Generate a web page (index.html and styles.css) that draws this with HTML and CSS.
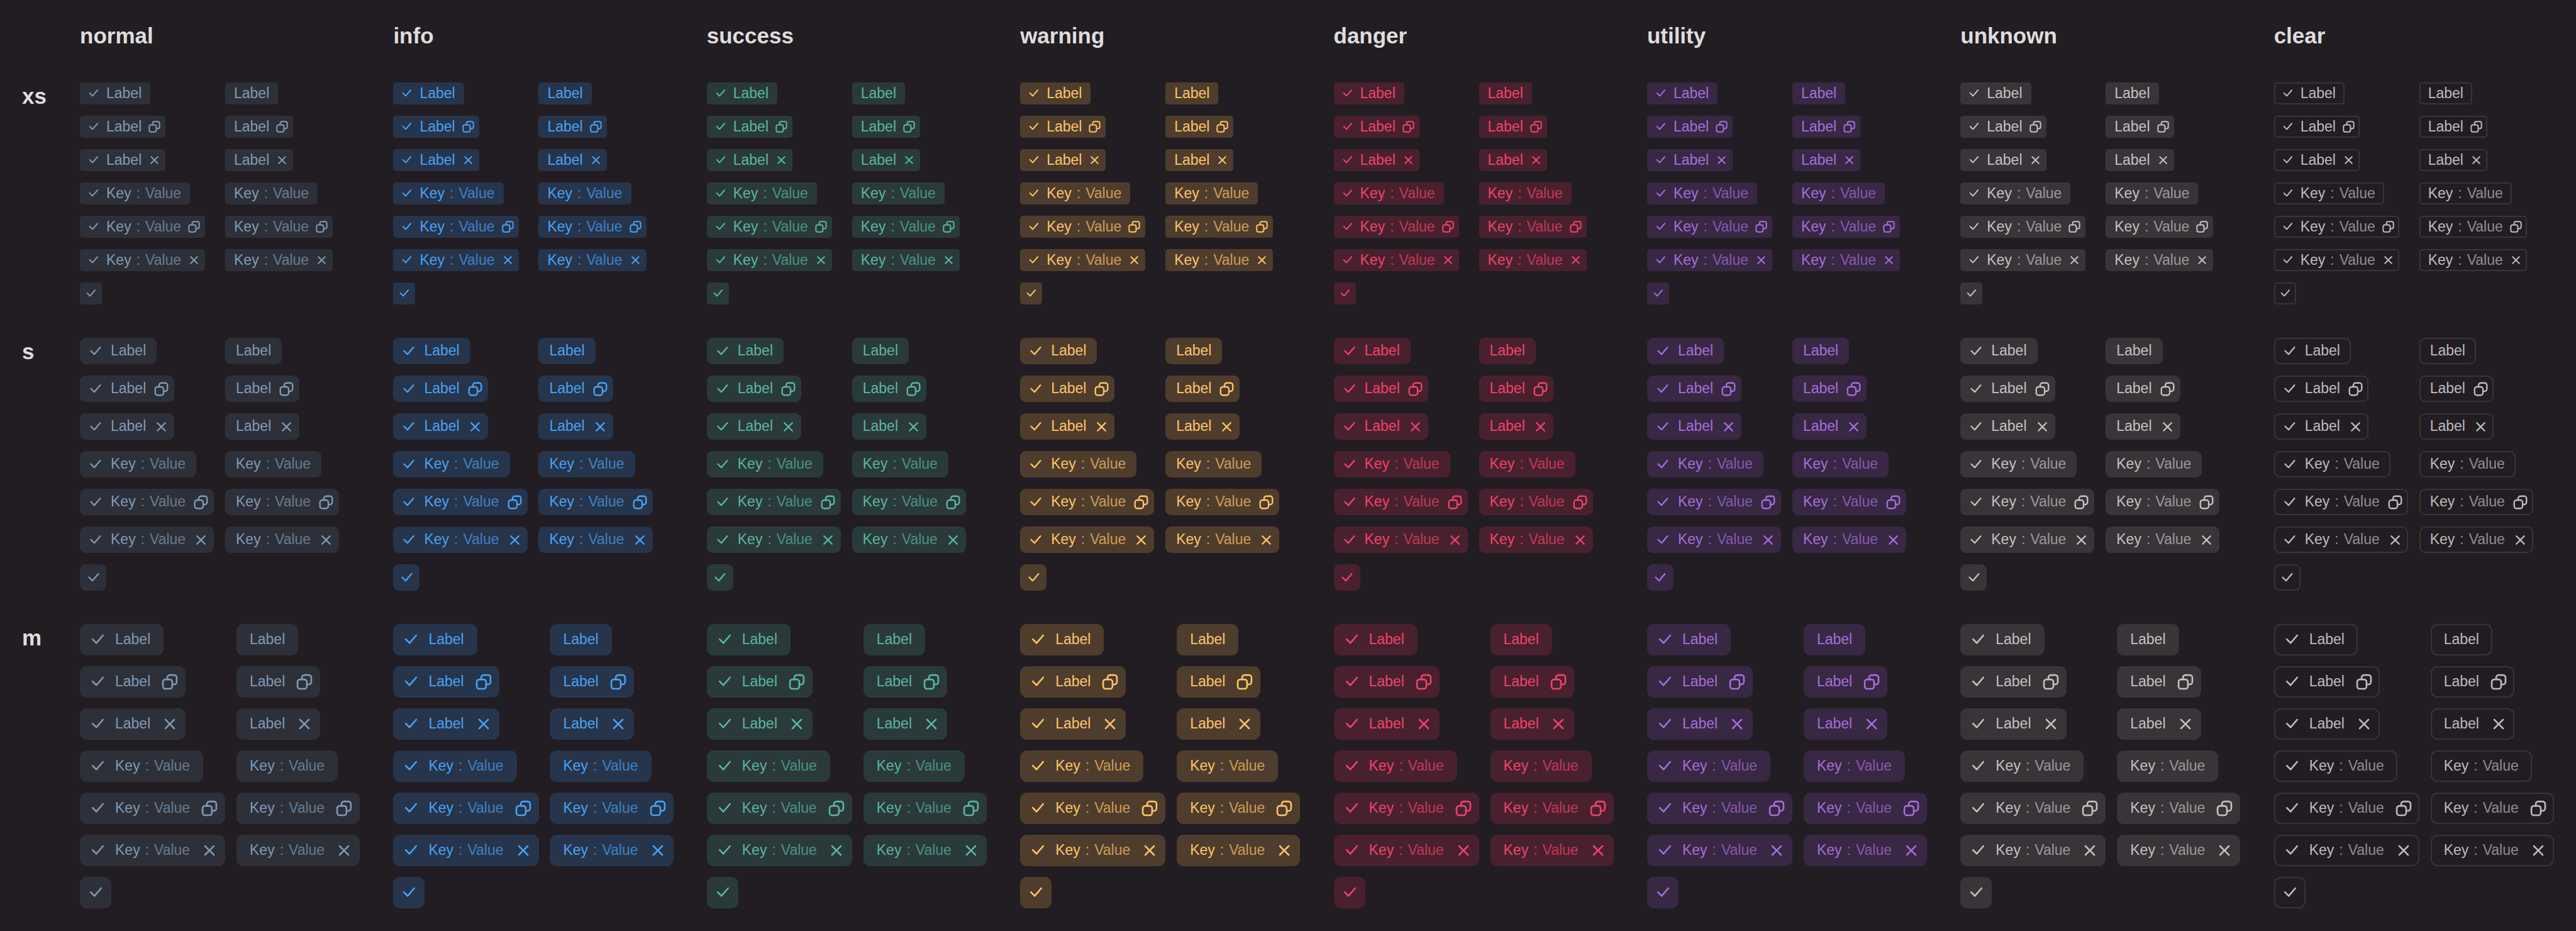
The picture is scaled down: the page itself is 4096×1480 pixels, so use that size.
FILE: index.html
```html
<!DOCTYPE html>
<html lang="en">
<head>
<meta charset="utf-8">
<title>Label showcase</title>
<link rel="stylesheet" href="styles.css">
</head>
<body>
<svg class="sprite" aria-hidden="true">
  <symbol id="check" viewBox="0 0 16 16"><path fill-rule="evenodd" d="M13.488 3.43a.75.75 0 0 1 .081 1.058l-6 7a.75.75 0 0 1-1.1.042l-3.5-3.5A.75.75 0 0 1 4.03 6.97l2.928 2.927 5.473-6.385a.75.75 0 0 1 1.057-.081"/></symbol>
  <symbol id="copy" viewBox="0 0 16 16"><path fill-rule="evenodd" d="M12 2.5H8A1.5 1.5 0 0 0 6.5 4v1H8a3 3 0 0 1 3 3v1.5h1A1.5 1.5 0 0 0 13.5 8V4A1.5 1.5 0 0 0 12 2.5M11 11h1a3 3 0 0 0 3-3V4a3 3 0 0 0-3-3H8a3 3 0 0 0-3 3v1H4a3 3 0 0 0-3 3v4a3 3 0 0 0 3 3h4a3 3 0 0 0 3-3zM4 6.5h4A1.5 1.5 0 0 1 9.5 8v4A1.5 1.5 0 0 1 8 13.5H4A1.5 1.5 0 0 1 2.5 12V8A1.5 1.5 0 0 1 4 6.5"/></symbol>
  <symbol id="close" viewBox="0 0 16 16"><path fill-rule="evenodd" d="M3.47 3.47a.75.75 0 0 1 1.06 0L8 6.94l3.47-3.47a.75.75 0 1 1 1.06 1.06L9.06 8l3.47 3.47a.75.75 0 1 1-1.06 1.06L8 9.06l-3.47 3.47a.75.75 0 0 1-1.06-1.06L6.94 8 3.47 4.53a.75.75 0 0 1 0-1.06Z"/></symbol>
</svg>
<main class="showcase" id="showcase"></main>
<script src="script.js"></script>
</body>
</html>
```
FILE: styles.css
```css
* { box-sizing: border-box; }

body {
  margin: 0;
  min-height: 100vh;
  background: #221d22;
  color: #dedddd;
  font-family: "Liberation Sans", Arial, sans-serif;
  font-size: 23px;
  line-height: 26px;
}

.sprite { display: none; }

.showcase {
  display: grid;
  grid-template-columns: 74px repeat(8, minmax(0, 1fr));
  column-gap: 18px;
  row-gap: 53px;
  padding: 35px 0 36px 35px;
}

.title {
  margin: 0;
  font-size: 35px;
  font-weight: 700;
  line-height: 43px;
}

.cell {
  display: grid;
  grid-template-columns: 213px 1fr;
  column-gap: 18px;
  align-content: start;
}

.cell.m { grid-template-columns: 231px 1fr; }

.stack {
  display: flex;
  flex-direction: column;
  align-items: flex-start;
  gap: 18px;
}

.cell.m .stack { gap: 17px; }

/* Label */
.label {
  --height: 35px;
  --icon: 21px;
  --edge: 14px;
  --icon-edge: 11px;
  --icon-gap: 10px;
  --action-gap: 10px;
  --action-edge: 7px;
  display: flex;
  align-items: center;
  height: var(--height);
  padding: 0 var(--edge) 0 var(--edge);
  border-radius: 5px;
  white-space: nowrap;
  background: var(--fill);
  color: var(--ink);
}

.label.s {
  --height: 42px;
  --icon: 25px;
  --edge: 17px;
  --icon-edge: 12px;
  --icon-gap: 12px;
  --action-gap: 12px;
  --action-edge: 8px;
  border-radius: 9px;
}

.label.m {
  --height: 50px;
  --icon: 28px;
  --edge: 21px;
  --icon-edge: 14px;
  --icon-gap: 14px;
  --action-gap: 17px;
  --action-edge: 11px;
  border-radius: 11px;
}

.label.with-icon { padding-left: var(--icon-edge); }
.label.with-action { padding-right: var(--action-edge); }
.label.icon-only {
  width: var(--height);
  padding: 0;
  justify-content: center;
}

.icon {
  display: block;
  flex: none;
  width: var(--icon);
  height: var(--icon);
  fill: currentColor;
}

.with-icon > .icon { margin-right: var(--icon-gap); }

.action {
  margin: 0 0 0 var(--action-gap);
  padding: 0;
  border: 0;
  background: none;
  color: inherit;
  cursor: pointer;
}

.text {
  display: flex;
  gap: 8px;
  padding-bottom: 2px;
}

.value {
  display: flex;
  gap: 8px;
  opacity: 0.7;
}

.normal { --fill: #2e3039; --ink: #7f9ab5; }
.info { --fill: #26354b; --ink: #4aa1f2; }
.success { --fill: #2a3a3a; --ink: #5bb5a2; }
.warning { --fill: #4e3d2d; --ink: #ffc46a; }
.danger { --fill: #49212e; --ink: #ee436d; }
.utility { --fill: #382843; --ink: #a56eda; }
.unknown { --fill: #383438; --ink: #c3c1c3; }
.clear { --fill: none; --ink: #bdbbbd; }
.label.clear { box-shadow: inset 0 0 0 2px #383438; }
```
FILE: script.js
```js
const themes = ['normal', 'info', 'success', 'warning', 'danger', 'utility', 'unknown', 'clear'];
const sizes = ['xs', 's', 'm'];
const contents = ['Label', 'Key'];
const actions = ['', 'copy', 'close'];

const icon = (name) => `<svg class="icon" aria-hidden="true"><use href="#${name}"/></svg>`;

function text(content) {
  return content === 'Key'
    ? '<span class="text"><span>Key</span><span class="value"><span>:</span><span>Value</span></span></span>'
    : '<span class="text">Label</span>';
}

function label(theme, size, content, withIcon, action) {
  const classes = ['label', theme, size];
  if (withIcon) classes.push('with-icon');
  if (action) classes.push('with-action');
  return `<div class="${classes.join(' ')}">`
    + (withIcon ? icon('check') : '')
    + text(content)
    + (action ? `<button class="action" type="button" aria-label="${action}">${icon(action)}</button>` : '')
    + '</div>';
}

function stack(theme, size, withIcon) {
  const rows = contents.flatMap((content) => actions.map((action) => label(theme, size, content, withIcon, action)));
  if (withIcon) rows.push(`<div class="label icon-only ${theme} ${size}">${icon('check')}</div>`);
  return `<div class="stack">${rows.join('')}</div>`;
}

const header = '<div></div>' + themes.map((theme) => `<h2 class="title">${theme}</h2>`).join('');
const body = sizes.map((size) => `<h2 class="title">${size}</h2>`
  + themes.map((theme) => `<section class="cell ${size}">${stack(theme, size, true)}${stack(theme, size, false)}</section>`).join('')).join('');

document.getElementById('showcase').innerHTML = header + body;
```
